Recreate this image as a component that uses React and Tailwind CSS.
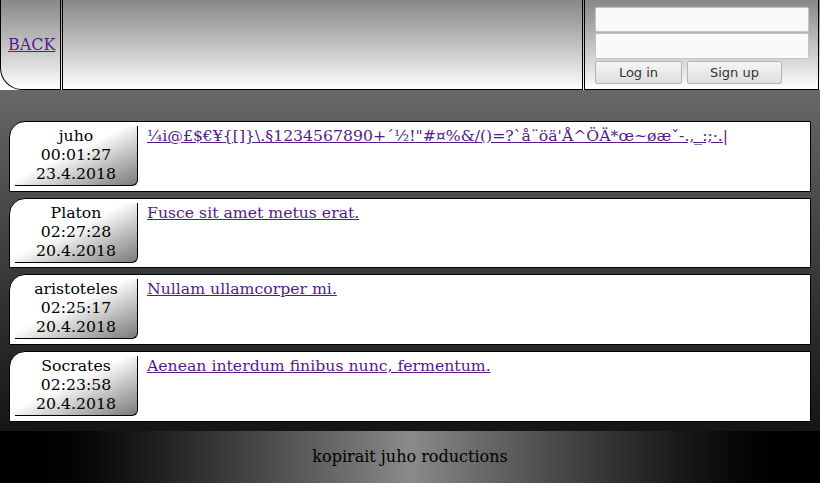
const messages = [
  {
    user: "juho",
    time: "00:01:27",
    date: "23.4.2018",
    text: "¼i@£$€¥{[]}\\.§1234567890+´½!\"#¤%&/()=?`å¨öä'Å^ÖÄ*œ~øæˇ-.,_:;·.|",
  },
  { user: "Platon", time: "02:27:28", date: "20.4.2018", text: "Fusce sit amet metus erat." },
  { user: "aristoteles", time: "02:25:17", date: "20.4.2018", text: "Nullam ullamcorper mi." },
  { user: "Socrates", time: "02:23:58", date: "20.4.2018", text: "Aenean interdum finibus nunc, fermentum." },
];

const MessageCard = ({ user, time, date, text }) => (
  <div className="h-[70.67px] shrink-0 flex items-start border border-black rounded-tl-[16px] bg-white pl-[5px] pt-[4px] text-[15.7px]">
    <div className="w-[123px] h-[60px] text-center leading-[19px] text-black border-r border-b border-black rounded-tl-[16px] rounded-br-[6px] bg-linear-to-br from-white from-45% to-[#7a7a7a]">
      <div>{user}</div>
      <div>{time}</div>
      <div>{date}</div>
    </div>
    <a href="#" className="ml-[9px] leading-[19px] underline text-[#551a8b] whitespace-nowrap">
      {text}
    </a>
  </div>
);

export default function App() {
  return (
    <div className="w-[820px] h-[483px] flex flex-col font-['DejaVu_Serif',serif] text-base overflow-hidden">
      {/* HEADER */}
      <header className="flex h-[90px] shrink-0">
        <div className="w-[61px] flex items-center pl-[7px] pt-px border-l border-r border-b border-black rounded-bl-[22px] bg-linear-to-b from-[#888] to-white">
          <a href="#" className="underline text-[#551a8b]">
            BACK
          </a>
        </div>
        <div className="flex-1 flex px-px bg-linear-to-b from-[#888] to-white">
          <div className="flex-1 border-l border-r border-b border-black" />
          <div className="w-[235px] ml-px pl-[10px] pt-[7px] border-l border-r border-b border-black font-['DejaVu_Sans',sans-serif]">
            <input className="block w-[214px] h-[25px] bg-[#fafafa] border border-[#c4c4c4] rounded-[2px] outline-none" />
            <input type="password" className="block w-[214px] h-[26px] mt-px bg-[#fafafa] border border-[#c4c4c4] rounded-[2px] outline-none" />
            <div className="flex gap-[5px] mt-[2px]">
              <button className="w-[87px] h-[23px] text-[13px] text-[#333] border border-[#b4b4b4] rounded-[2px] bg-linear-to-b from-[#f6f6f6] to-[#dedede]">
                Log in
              </button>
              <button className="w-[95px] h-[23px] text-[13px] text-[#333] border border-[#b4b4b4] rounded-[2px] bg-linear-to-b from-[#f6f6f6] to-[#dedede]">
                Sign up
              </button>
            </div>
          </div>
        </div>
      </header>

      {/* MESSAGES */}
      <main className="flex-1 flex flex-col gap-[6px] px-[9px] pt-[31px] bg-linear-to-b from-[#686868] to-[#151515]">
        {messages.map((m) => (
          <MessageCard key={m.user} {...m} />
        ))}
      </main>

      {/* FOOTER */}
      <footer className="h-[52px] shrink-0 flex items-center justify-center text-black bg-linear-to-r from-black via-[#8a8a8a] to-black">
        kopirait juho roductions
      </footer>
    </div>
  );
}
